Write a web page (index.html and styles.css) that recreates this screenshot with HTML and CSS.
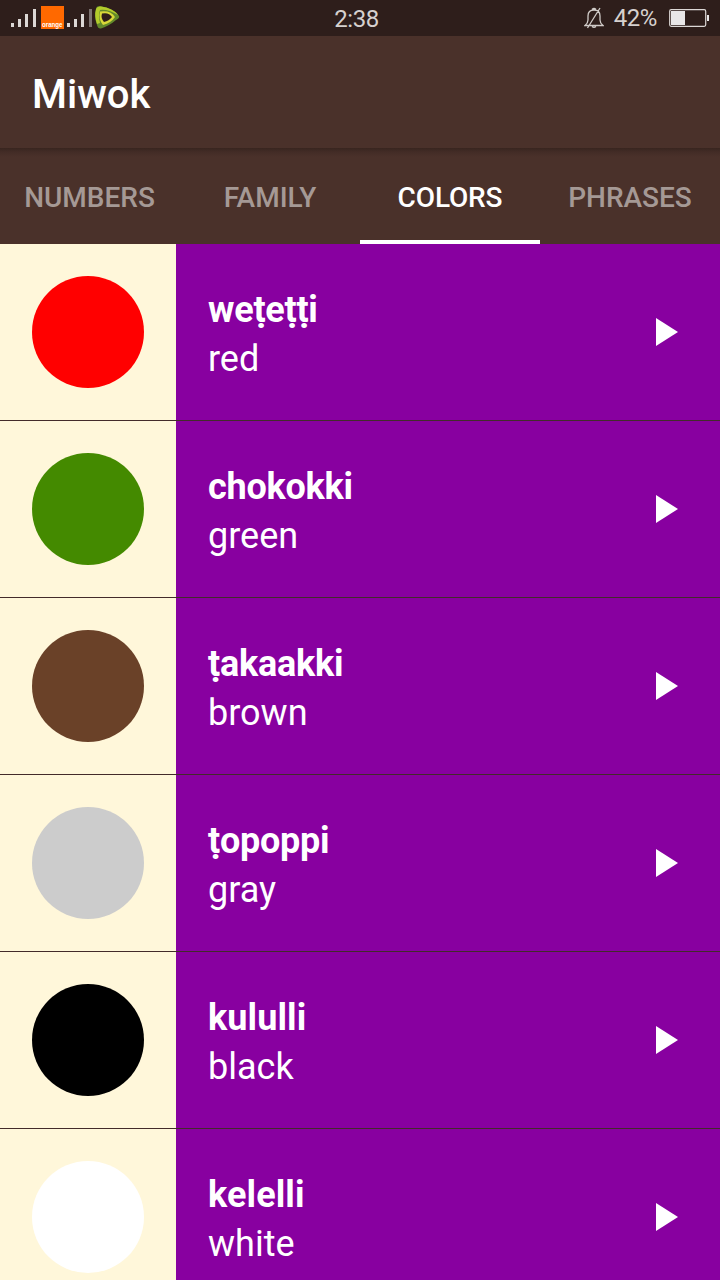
FILE: index.html
```html
<!DOCTYPE html>
<html lang="en">
<head>
<meta charset="utf-8">
<title>Miwok</title>
<link rel="stylesheet" href="styles.css">
</head>
<body>
<div class="screen">
  <header class="status">
    <svg class="signals" width="130" height="36" viewBox="0 0 130 36" aria-hidden="true">
      <g fill="#dcd8d6">
        <path d="M11 23h3v4h-3zM18 19h3v8h-3zM25 14h3v13h-3zM33 9h3v18h-3z"/>
        <path d="M67 23h3v4h-3zM74 19h3v8h-3zM81 14h3v13h-3z"/>
      </g>
      <path fill="#7d7371" d="M89 9h3v18h-3z"/>
      <path fill="#ff6900" d="M41 6h23v23H41z"/>
      <text class="carrier" x="42" y="26.500" textLength="20.500" lengthAdjust="spacingAndGlyphs">orange</text>
      <path fill="#62892b" d="M96 9Q96 6 100 6Q115 9 119 16Q120 18 116 20Q109 26 101 28.500Q98 29 97 25Q94 17 96 9Z"/>
      <path fill="#b4cc2b" d="M96 9Q97 6 101 6.500Q113 8 118 15Q108 9 100 10Q98 15 100 23L97 24Q94 16 96 9Z"/>
      <path fill="#d8d838" d="M100 11.500Q111 10 115 17Q111 23 103 25Q98 19 100 11.500Z"/>
      <path fill="#2e1e1b" d="M102 13.500Q109 12 112 17Q109 21 104 22Q100.500 18 102 13.500Z"/>
    </svg>
    <span class="clock">2:38</span>
    <div class="power">
      <svg width="20" height="22" viewBox="0 0 20 22" fill="none" stroke="#d0cbc8" stroke-width="1.300" aria-hidden="true">
        <path d="M1 18.500H19Q16 16 16 13V9Q16 3 10 3Q4 3 4 9V13Q4 16 1 18.500ZM8 2.500Q10 .5 12 2.500M8 19.500Q10 21 12 19.500M16 1L3.500 21"/>
      </svg>
      <span class="percent">42%</span>
      <svg class="battery" width="41" height="20" viewBox="0 0 41 20" aria-hidden="true">
        <rect x=".7" y="1.700" width="36" height="16.600" rx="1.500" fill="none" stroke="#dcd8d6" stroke-width="1.200"/>
        <path fill="#e9e7e8" d="M2 3h14v14H2zM38 7h2v6h-2z"/>
      </svg>
    </div>
  </header>
  <h1 class="toolbar">Miwok</h1>
  <nav class="tabs">
    <span class="tab">NUMBERS</span>
    <span class="tab">FAMILY</span>
    <span class="tab active">COLORS</span>
    <span class="tab">PHRASES</span>
  </nav>
  <main class="list">
    <section class="row"><div class="thumb"><i class="dot red"></i></div><div class="words"><b class="tight">weṭeṭṭi</b><span>red</span></div><svg class="play" viewBox="0 0 22 28"><path d="M0 0L22 14L0 28Z"/></svg></section>
    <section class="row"><div class="thumb"><i class="dot green"></i></div><div class="words"><b class="tight">chokokki</b><span>green</span></div><svg class="play" viewBox="0 0 22 28"><path d="M0 0L22 14L0 28Z"/></svg></section>
    <section class="row"><div class="thumb"><i class="dot brown"></i></div><div class="words"><b class="tight">ṭakaakki</b><span>brown</span></div><svg class="play" viewBox="0 0 22 28"><path d="M0 0L22 14L0 28Z"/></svg></section>
    <section class="row"><div class="thumb"><i class="dot gray"></i></div><div class="words"><b class="tight">ṭopoppi</b><span>gray</span></div><svg class="play" viewBox="0 0 22 28"><path d="M0 0L22 14L0 28Z"/></svg></section>
    <section class="row"><div class="thumb"><i class="dot black"></i></div><div class="words"><b class="loose">kululli</b><span>black</span></div><svg class="play" viewBox="0 0 22 28"><path d="M0 0L22 14L0 28Z"/></svg></section>
    <section class="row"><div class="thumb"><i class="dot white"></i></div><div class="words"><b class="loose">kelelli</b><span>white</span></div><svg class="play" viewBox="0 0 22 28"><path d="M0 0L22 14L0 28Z"/></svg></section>
  </main>
</div>
</body>
</html>
```
FILE: styles.css
```css
* { box-sizing: border-box; }
body { margin: 0; font-family: Roboto, sans-serif; }
.screen {
  width: 720px;
  height: 1280px;
  overflow: hidden;
  display: flex;
  flex-direction: column;
  background: #4a312a;
  color: #fff;
}
.status {
  flex: none;
  height: 36px;
  display: grid;
  grid-template-columns: 1fr auto 1fr;
  align-items: center;
  background: #2e1e1b;
  color: #d6d1cf;
}
.signals { display: block; }
.carrier { font: bold 7px "Liberation Sans", sans-serif; fill: #fff; }
.clock { font-size: 24px; line-height: 34px; padding: 2px 7px 0 0; letter-spacing: -0.4px; }
.power {
  display: flex;
  justify-content: flex-end;
  align-items: center;
  padding-right: 10px;
}
.percent { font-size: 24px; line-height: 36px; margin: 0 12px 0 10px; letter-spacing: -0.4px; }
.toolbar {
  flex: none;
  height: 112px;
  margin: 0;
  padding: 3px 32px 0;
  font-size: 40px;
  font-weight: 500;
  line-height: 112px;
}
.tabs {
  flex: none;
  height: 96px;
  display: grid;
  grid-template-columns: repeat(4, 1fr);
  background: linear-gradient(#38251f, #432c26 4px, #4a312a 9px);
}
.tab {
  padding-top: 3px;
  text-align: center;
  font-size: 28px;
  font-weight: 500;
  line-height: 93px;
  color: #a59995;
}
.tab:first-child { padding-right: 1px; }
.active { color: #fff; box-shadow: inset 0 -4px #fff; letter-spacing: -0.15px; }
.list { flex: 1; min-height: 0; overflow: hidden; }
.row {
  height: 177px;
  display: flex;
  align-items: center;
  background: #8800a0;
  border-bottom: 1px solid #432b2a;
}
.thumb {
  width: 176px;
  height: 176px;
  padding: 32px;
  background: #fff7da;
}
.dot { display: block; width: 112px; height: 112px; border-radius: 50%; }
.red { background: #ff0000; }
.green { background: #448a00; }
.brown { background: #6a4128; }
.gray { background: #cccccc; }
.black { background: #000; }
.white { background: #fff; }
.words {
  flex: 1;
  display: flex;
  flex-direction: column;
  padding: 6px 0 0 32px;
  font-size: 36px;
  line-height: 49px;
}
.tight { letter-spacing: -0.25px; }
.loose { letter-spacing: 0.1px; }
.play { width: 22px; height: 28px; margin-right: 42px; fill: #fff; }
```
